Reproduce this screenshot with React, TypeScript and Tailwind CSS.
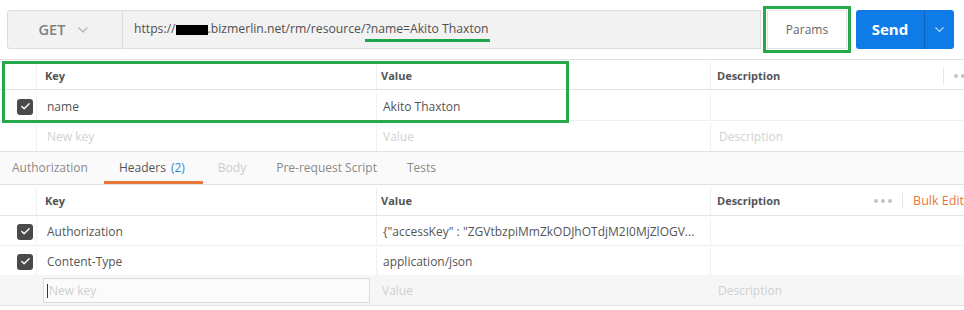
import { ChevronDown, Check } from 'lucide-react'

const font = { fontFamily: '"Open Sans", "Noto Sans", sans-serif' }

function Box({ on }: { on: boolean }) {
  if (!on) return null
  return (
    <span className="flex h-[16px] w-[16px] items-center justify-center rounded-[3px] bg-[#4a4a4a]">
      <Check className="h-[11px] w-[11px] text-white" strokeWidth={3} />
    </span>
  )
}

function Dots() {
  return (
    <span className="flex items-center gap-[3px]">
      <span className="h-[4px] w-[4px] shrink-0 rounded-full bg-[#c4c4c4]" />
      <span className="h-[4px] w-[4px] shrink-0 rounded-full bg-[#c4c4c4]" />
      <span className="h-[4px] w-[4px] shrink-0 rounded-full bg-[#c4c4c4]" />
    </span>
  )
}

const cols = 'grid grid-cols-[37px_339px_334px_1fr]'

export default function App() {
  return (
    <div className="relative h-[310px] w-[964px] overflow-hidden bg-white text-[12px] text-[#505050]" style={font}>
      {/* request bar */}
      <div className="flex h-[60px] items-center border-b border-[#e2e2e2] pl-[7px] pr-[10px]">
        <div className="flex h-[39px] w-[116px] items-center justify-center gap-[10px] rounded-l-[3px] border border-[#dcdcdc] bg-[#f2f2f2]">
          <span className="text-[14.5px] font-semibold text-[#808080]">GET</span>
          <ChevronDown className="h-[16px] w-[16px] text-[#b8b8b8]" strokeWidth={2} />
        </div>
        <div className="flex h-[39px] flex-1 items-center border-y border-r border-[#dcdcdc] bg-[#f2f2f2] pl-[11px] text-[12.2px] text-[#505050]">
          <span>https://</span>
          <span className="inline-block h-[10px] w-[32px] bg-black" />
          <span>.bizmerlin.net/rm/resource/?</span>
          <span className="relative">
            name=Akito Thaxton
            <span className="absolute left-[-6px] right-[-1px] top-[19px] h-[3px] bg-[#1fa64a]" />
          </span>
        </div>
        <div className="-my-[1px] ml-[2px] border-[3px] border-[#27a84a] p-[1px]">
          <div className="flex h-[39px] w-[80px] items-center justify-center border border-[#e4e4e4] bg-white text-[12px] text-[#666]">
            Params
          </div>
        </div>
        <div className="ml-[5px] flex h-[39px] w-[98px] overflow-hidden rounded-[3px] bg-[#0e7be6]">
          <div className="flex flex-1 items-center justify-center border-r border-[#0a66c2] text-[15px] font-bold text-white">
            Send
          </div>
          <div className="flex w-[29px] items-center justify-center">
            <ChevronDown className="h-[15px] w-[15px] text-[#b9d8f8]" strokeWidth={2} />
          </div>
        </div>
      </div>

      {/* params table */}
      <div className="border-b border-[#e2e2e2]">
        <div className={`${cols} h-[30px] items-center border-b border-[#e4e4e4] pt-[3px] text-[11px] font-bold text-[#555]`}>
          <div className="h-full border-r border-[#f2f2f2]" />
          <div className="pl-[8px]">Key</div>
          <div className="flex h-full items-center border-l border-[#f0f0f0] pl-[4px]">Value</div>
          <div className="flex h-full items-center overflow-hidden border-l border-[#f0f0f0] pl-[6px]">
            <span className="flex-1">Description</span>
            <span className="h-[16px] border-l border-[#e6e6e6]" />
            <span className="flex w-[20px] shrink-0 overflow-hidden pl-[10px]">
              <Dots />
            </span>
          </div>
        </div>
        <div className={`${cols} h-[31px] items-center border-b border-[#f0f0f0] pt-[3px] text-[12px] text-[#555]`}>
          <div className="flex h-full items-center justify-center border-r border-[#f2f2f2] pl-[14px]">
            <Box on />
          </div>
          <div className="pl-[10px]">name</div>
          <div className="flex h-full items-center border-l border-[#f0f0f0] pl-[6px]">Akito Thaxton</div>
          <div className="h-full border-l border-[#f0f0f0]" />
        </div>
        <div className={`${cols} h-[30px] items-center pt-[2px] text-[12px] text-[#d2d2d2]`}>
          <div className="h-full border-r border-[#f2f2f2]" />
          <div className="pl-[10px]">New key</div>
          <div className="flex h-full items-center border-l border-[#f0f0f0] pl-[6px]">Value</div>
          <div className="flex h-full items-center border-l border-[#f0f0f0] pl-[8px]">Description</div>
        </div>
      </div>

      {/* tabs */}
      <div className="flex h-[33px] items-stretch border-b border-[#e2e2e2] bg-[#fafafa] text-[12px] text-[#8a8a8a]">
        <div className="flex items-center pl-[12px] pr-[16px]">Authorization</div>
        <div className="flex items-center border-b-[3px] border-[#e8773a] pl-[15px] pr-[18px] pt-[3px] text-[#555]">
          Headers <span className="ml-[5px] text-[#2c87d8]">(2)</span>
        </div>
        <div className="flex items-center pl-[15px] pr-[15px] text-[#cccccc]">Body</div>
        <div className="flex items-center px-[15px]">Pre-request Script</div>
        <div className="flex items-center px-[15px]">Tests</div>
      </div>

      {/* headers table */}
      <div className="border-b border-[#e2e2e2]">
        <div className={`${cols} h-[31px] items-center border-b border-[#e4e4e4] pt-[2px] text-[11px] font-bold text-[#555]`}>
          <div className="h-full border-r border-[#f2f2f2]" />
          <div className="pl-[8px]">Key</div>
          <div className="flex h-full items-center border-l border-[#f0f0f0] pl-[4px]">Value</div>
          <div className="flex h-full items-center border-l border-[#f0f0f0] pl-[6px]">
            <span className="flex-1">Description</span>
            <span className="pr-[10px]">
              <Dots />
            </span>
            <span className="h-[16px] border-l border-[#e6e6e6]" />
            <span className="pl-[10px] text-[12.5px] font-normal text-[#e8773a]">Bulk Edit</span>
          </div>
        </div>
        <div className={`${cols} h-[30px] items-center border-b border-[#f0f0f0] pt-[2px] text-[12px] text-[#555]`}>
          <div className="flex h-full items-center justify-center border-r border-[#f2f2f2] pl-[14px]">
            <Box on />
          </div>
          <div className="pl-[10px]">Authorization</div>
          <div className="flex h-full items-center border-l border-[#f0f0f0] pl-[6px]">
            {'{"accessKey" : "ZGVtbzpiMmZkODJhOTdjM2I0MjZlOGV...'}
          </div>
          <div className="h-full border-l border-[#f0f0f0]" />
        </div>
        <div className={`${cols} h-[29px] items-center pt-[2px] text-[12px] text-[#555]`}>
          <div className="flex h-full items-center justify-center border-r border-[#f2f2f2] pl-[14px]">
            <Box on />
          </div>
          <div className="pl-[10px]">Content-Type</div>
          <div className="flex h-full items-center border-l border-[#f0f0f0] pl-[6px]">application/json</div>
          <div className="h-full border-l border-[#f0f0f0]" />
        </div>
        <div className={`${cols} h-[30px] items-center bg-[#f6f6f6] text-[12px] text-[#d0d0d0]`}>
          <div className="h-full" />
          <div className="pr-[6px]">
            <div className="ml-[6px] flex h-[25px] items-center border border-[#dcdcdc] bg-[#fbfbfb] pl-[3px] pt-[2px]">
              <span className="mr-[1px] h-[14px] w-[1px] bg-[#333]" />
              New key
            </div>
          </div>
          <div className="pl-[6px] pt-[2px]">Value</div>
          <div className="pl-[8px] pt-[2px]">Description</div>
        </div>
      </div>

      {/* annotation */}
      <div className="absolute left-[2px] top-[61px] h-[62px] w-[567px] border-[3px] border-[#27a84a]" />
    </div>
  )
}
